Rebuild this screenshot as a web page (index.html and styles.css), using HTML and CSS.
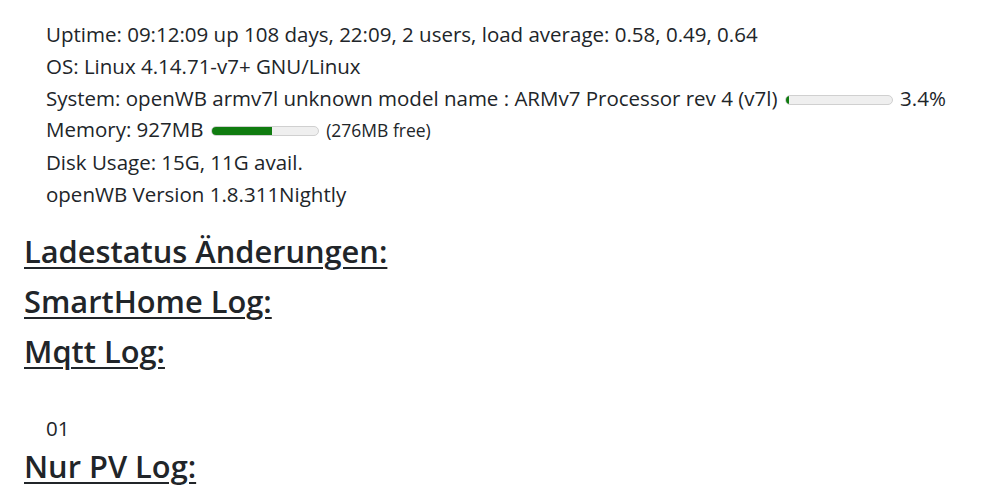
FILE: index.html
```html
<!DOCTYPE html>
<html lang="de">
<head>
<meta charset="utf-8">
<title>openWB Status</title>
<link rel="stylesheet" href="styles.css">
</head>
<body>
<div class="page">
  <div class="info">
    <div class="line">Uptime: 09:12:09 up 108 days, 22:09, 2 users, load average: 0.58, 0.49, 0.64</div>
    <div class="line">OS: Linux 4.14.71-v7+ GNU/Linux</div>
    <div class="line">System: openWB armv7l unknown model name : ARMv7 Processor rev 4 (v7l) <span class="meter"><span class="meter-fill" style="width:3.4%"></span></span> 3.4%</div>
    <div class="line">Memory: 927MB <span class="meter"><span class="meter-fill" style="width:57%"></span></span> <span class="small">(276MB free)</span></div>
    <div class="line">Disk Usage: 15G, 11G avail.</div>
    <div class="line">openWB Version 1.8.311Nightly</div>
  </div>
  <div class="logs">
    <h3 class="log-title">Ladestatus Änderungen:</h3>
    <h3 class="log-title">SmartHome Log:</h3>
    <h3 class="log-title">Mqtt Log:</h3>
    <div class="log-body">01</div>
    <h3 class="log-title">Nur PV Log:</h3>
  </div>
</div>
</body>
</html>
```

FILE: styles.css
```css
html, body {
  margin: 0;
  padding: 0;
  background: #ffffff;
}
body {
  font-family: "Open Sans", "Noto Sans", sans-serif;
  color: #212529;
  font-size: 20.5px;
}
.page {
  padding: 19px 0 0 24px;
}
.info {
  padding-left: 22px;
}
.line {
  line-height: 31.8px;
  white-space: nowrap;
}
.meter {
  display: inline-block;
  width: 106px;
  height: 8px;
  border: 1px solid #d0d0d0;
  border-radius: 5px;
  background: #efefef;
  overflow: hidden;
  vertical-align: 1px;
  margin: 0 2px;
}
.meter-fill {
  display: block;
  height: 100%;
  background: #107c10;
}
.small {
  font-size: 17.5px;
}
.logs {
  padding-top: 19px;
}
.log-title {
  margin: 0 0 8px 0;
  font-size: 30.8px;
  font-weight: 600;
  line-height: 42px;
  text-decoration: underline;
  text-underline-offset: 4px;
  text-decoration-thickness: 2px;
}
.log-body {
  padding: 33px 0 0 22px;
  line-height: 31.8px;
}
```
